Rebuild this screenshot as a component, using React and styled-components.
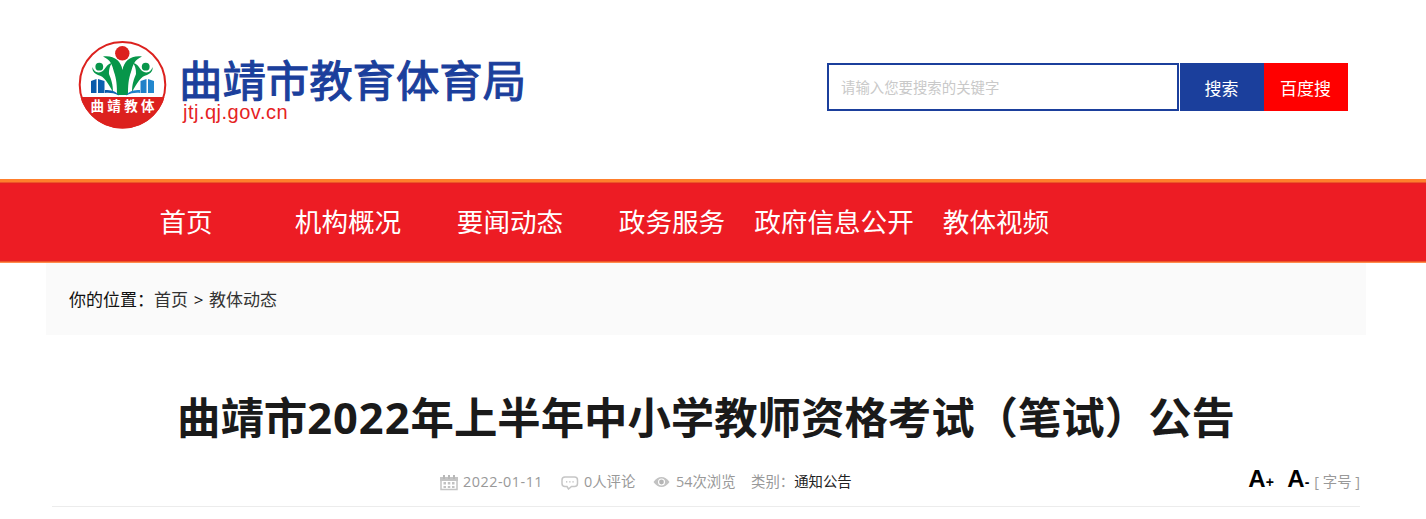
import React from "react";
import styled, { createGlobalStyle } from "styled-components";

const GlobalStyle = createGlobalStyle`
  * { box-sizing: border-box; }
  body {
    margin: 0;
    background: #fff;
    font-family: "Open Sans", "Noto Sans CJK SC", sans-serif;
    overflow: hidden;
  }
  a { color: inherit; text-decoration: none; white-space: nowrap; }
`;

const Page = styled.div`
  width: 1426px;
  height: 519px;
  overflow: hidden;
`;

const Header = styled.header`
  display: flex;
  justify-content: space-between;
  align-items: flex-start;
  height: 179px;
  padding: 40px 78px 0;
`;

const Brand = styled.a`
  display: flex;
  align-items: flex-start;
`;

const BrandText = styled.div`
  display: flex;
  flex-direction: column;
  padding: 17px 0 0 12px;
`;

const BrandName = styled.span`
  font-family: "Noto Sans CJK SC", sans-serif;
  font-size: 43.4px;
  line-height: 42px;
  color: #1b3f9c;
  -webkit-text-stroke: 1.1px #1b3f9c;
`;

const BrandDomain = styled.span`
  font-family: "Liberation Sans", sans-serif;
  font-size: 20px;
  line-height: 20px;
  letter-spacing: 0.5px;
  color: #e5231f;
  padding: 3px 0 0 4px;
`;

const SearchForm = styled.form`
  display: flex;
  margin-top: 23px;
`;

const SearchInput = styled.input`
  width: 352px;
  height: 48px;
  margin-right: 1px;
  padding: 0 12px 2px;
  border: 2px solid #1b3f9c;
  border-radius: 0;
  outline: none;
  font-family: "Noto Sans CJK SC", sans-serif;
  font-size: 14.4px;
  &::placeholder { color: #c9c9c9; }
`;

const SearchButton = styled.button`
  width: 84px;
  height: 48px;
  padding: 0 1px 0 0;
  border: 0;
  background: ${(p) => p.$color};
  color: #fff;
  font-family: "Noto Sans CJK SC", sans-serif;
  font-size: 17px;
`;

const Nav = styled.nav`
  display: flex;
  height: 84px;
  padding-left: 105px;
  background: linear-gradient(
    #ff7f2c 0 3px, #ee542a 3px 4px, #e42320 4px 5px,
    #ed1c24 5px 81px, #e42320 81px 82px, #ee542a 82px 83px, #ff8b4c 83px
  );
`;

const NavItem = styled.a`
  width: 162px;
  padding-top: 5px;
  text-align: center;
  font-size: 26.6px;
  line-height: 76px;
  color: #fff;
`;

const Breadcrumb = styled.div`
  display: flex;
  width: 1320px;
  height: 72px;
  margin-left: 46px;
  padding-left: 23px;
  background: #fafafa;
  font-size: 17px;
  line-height: 73px;
  color: #111;
`;

const Crumb = styled.a`
  color: #333;
`;

const Separator = styled.span`
  width: 21px;
  text-align: center;
`;

const Title = styled.h1`
  width: 1320px;
  height: 98px;
  margin: 31px 0 0 46px;
  text-align: center;
  white-space: nowrap;
  font-size: 43.4px;
  font-weight: 700;
  line-height: 103px;
  color: #1a1a1a;
`;

const TitleYear = styled.span`
  letter-spacing: 1px;
`;

const MetaBar = styled.div`
  display: flex;
  align-items: center;
  width: 1308px;
  height: 43px;
  margin-left: 52px;
  padding: 0 0 6px 388px;
  border-bottom: 1px solid #ececec;
  font-size: 14.4px;
  line-height: 20px;
  color: #999;
  white-space: nowrap;
`;

const MetaItem = styled.span`
  display: flex;
  align-items: center;
  width: ${(p) => p.$width}px;
  height: 28px;
  letter-spacing: ${(p) => p.$spacing || 0}px;
`;

const MetaIcon = styled.svg`
  flex: none;
  margin-right: ${(p) => p.$gap}px;
`;

const Category = styled.a`
  color: #222;
`;

const FontSizer = styled.div`
  display: flex;
  align-items: center;
  margin-left: auto;
`;

const SizeButton = styled.a`
  width: ${(p) => p.$width}px;
  margin-top: -3px;
  font-family: "Liberation Sans", sans-serif;
  font-size: 24px;
  font-weight: 700;
  line-height: 30px;
  color: #000;
`;

const SizeSign = styled.span`
  font-size: 14px;
`;

function Emblem() {
  return (
    <svg width="89" height="90" viewBox="0 0 89 90">
      <defs>
        <clipPath id="disc"><circle cx="44.5" cy="44.8" r="43.8" /></clipPath>
        <linearGradient id="tower" x1="0" x2="1">
          <stop offset="0" stopColor="#0758a8" />
          <stop offset="1" stopColor="#2489cf" />
        </linearGradient>
      </defs>
      <circle cx="44.5" cy="44.8" r="42.8" fill="#fff" />
      <path clipPath="url(#disc)" fill="#dc211e" d="M0 57H89V90H0Z" />
      <circle cx="44.5" cy="44.8" r="42.8" fill="none" stroke="#dc211e" strokeWidth="2" />
      <circle cx="44.3" cy="13.3" r="7.2" fill="#dc211e" />
      <g fill="#07964a">
        <path d="M25 16.5C36 15 43 21 44.5 30C46 21 53 15 64 16.5C56 20 55 25 53 32C50.5 39 50 45 50 55H39C39 45 38.5 39 36 32C34 25 33 20 25 16.5Z" />
        <circle cx="21.3" cy="26.7" r="3.9" />
        <circle cx="67.7" cy="26.7" r="3.9" />
        <path d="M14.5 27C15.5 31 19 34 24 31.5C28 29 28 24 34 23C31 27 31 31 31 34C33 39 35 44 35 52C30 43 26 36 20 35C16 33 14 31 14.5 27Z" />
        <path d="M74.5 27C73.5 31 70 34 65 31.5C61 29 61 24 55 23C58 27 58 31 58 34C56 39 54 44 54 52C59 43 63 36 69 35C73 33 75 31 74.5 27Z" />
      </g>
      <g fill="url(#tower)">
        <path d="M13 41L18.5 39V53H13ZM20 41V39L26.5 41V53H20ZM62.5 41L68.5 39V53H62.5ZM70 39L76 41V53H70Z" />
        <path d="M27 50C33 50 38 51 41 55.5C36 53 31 52.5 27 53ZM62 50C56 50 51 51 48 55.5C53 53 58 52.5 62 53Z" />
      </g>
      <text x="44.5" y="70.8" textAnchor="middle" textLength="64" fill="#fff"
        fontFamily="Noto Sans CJK SC, sans-serif" fontWeight="700" fontSize="13.5">曲靖教体</text>
    </svg>
  );
}

function CalendarIcon() {
  return (
    <MetaIcon $gap={5} width="18" height="17" viewBox="0 0 18 17">
      <path fill="#c4c4c4" d="M0 3H18V7H0Z" />
      <path fill="none" stroke="#c4c4c4" strokeWidth="1.5" d="M1 4H17V15.5H1Z" />
      <path stroke="#b8b8b8" strokeWidth="2" d="M4 1V5M9 1V5M14 1V5" />
      <path fill="#c2c2c2" d="M3.5 8H6V10.5H3.5ZM7.8 8H10.3V10.5H7.8ZM12 8H14.5V10.5H12ZM3.5 12H6V14H3.5ZM7.8 12H10.3V14H7.8ZM12 12H14.5V14H12Z" />
    </MetaIcon>
  );
}

function CommentIcon() {
  return (
    <MetaIcon $gap={5} width="18" height="16" viewBox="0 0 18 16">
      <path fill="none" stroke="#c6c6c6" strokeWidth="1.5" d="M4 3H13.5Q16.5 3 16.5 6V9.5Q16.5 12.5 13.5 12.5H10.5L7.5 15L6 12.5H4Q1 12.5 1 9.5V6Q1 3 4 3Z" />
      <path fill="#bbb" d="M5 7.3H6.3V8.5H5ZM8.2 7.3H9.5V8.5H8.2ZM11.4 7.3H12.7V8.5H11.4Z" />
    </MetaIcon>
  );
}

function EyeIcon() {
  return (
    <MetaIcon $gap={6} width="17" height="14" viewBox="0 0 17 14">
      <path fill="#c2c2c2" d="M.5 7Q4 2 8.5 2T16.5 7Q13 12 8.5 12T.5 7Z" />
      <circle cx="8.5" cy="7" r="3.5" fill="#fff" />
      <circle cx="8.5" cy="7" r="2.4" fill="#b5b5b5" />
    </MetaIcon>
  );
}

const NAV_ITEMS = ["首页", "机构概况", "要闻动态", "政务服务", "政府信息公开", "教体视频"];

export default function App() {
  return (
    <Page>
      <GlobalStyle />
      <Header>
        <Brand>
          <Emblem />
          <BrandText>
            <BrandName>曲靖市教育体育局</BrandName>
            <BrandDomain>jtj.qj.gov.cn</BrandDomain>
          </BrandText>
        </Brand>
        <SearchForm>
          <SearchInput placeholder="请输入您要搜索的关键字" />
          <SearchButton type="button" $color="#1b3f9c">搜索</SearchButton>
          <SearchButton type="button" $color="#ff0000">百度搜</SearchButton>
        </SearchForm>
      </Header>
      <Nav>
        {NAV_ITEMS.map((label) => <NavItem key={label}>{label}</NavItem>)}
      </Nav>
      <Breadcrumb>
        <span>你的位置：</span>
        <Crumb>首页</Crumb>
        <Separator>&gt;</Separator>
        <Crumb>教体动态</Crumb>
      </Breadcrumb>
      <Title>曲靖市<TitleYear>2022</TitleYear>年上半年中小学教师资格考试（笔试）公告</Title>
      <MetaBar>
        <MetaItem $width={121} $spacing={0.5}><CalendarIcon />2022-01-11</MetaItem>
        <MetaItem $width={92}><CommentIcon />0人评论</MetaItem>
        <MetaItem $width={98}><EyeIcon />54次浏览</MetaItem>
        <MetaItem $width={110}>类别：<Category>通知公告</Category></MetaItem>
        <FontSizer>
          <SizeButton $width={39}>A<SizeSign>+</SizeSign></SizeButton>
          <SizeButton $width={27}>A<SizeSign>-</SizeSign></SizeButton>
          <span>[ 字号 ]</span>
        </FontSizer>
      </MetaBar>
    </Page>
  );
}
